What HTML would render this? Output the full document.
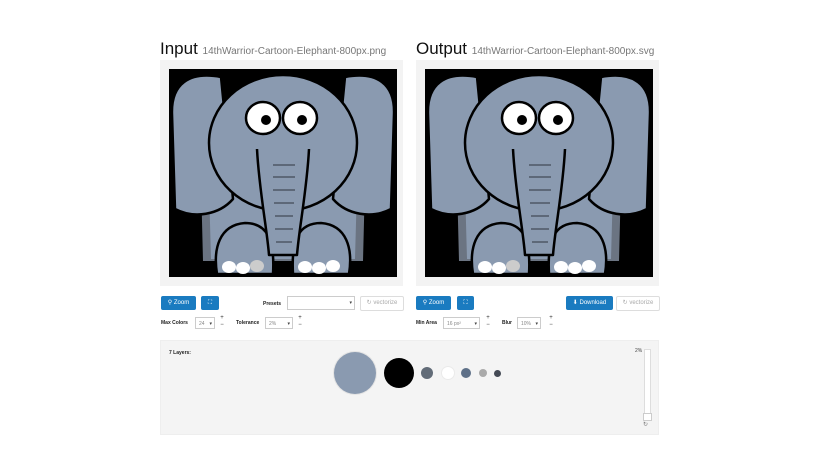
<!DOCTYPE html>
<html><head><style>
body{margin:0;width:820px;height:476px;background:#fff;font-family:"Liberation Sans",sans-serif;position:relative;overflow:hidden}
.a{position:absolute}
.h{font-size:17px;color:#111;top:39px}
.h span{font-size:10px;color:#777}
.frame{background:#f3f3f3;width:243px;height:226px;top:60px}
.blk{position:absolute;left:9px;top:9px;width:228px;height:208px;background:#000}
.btn{background:#1a7bc0;color:#fff;font-size:6px;height:14px;line-height:14px;text-align:center;border-radius:2px;top:296px}
.vb{background:#fff;border:1px solid #ddd;color:#aaa;font-size:6px;height:13px;line-height:13px;text-align:center;border-radius:2px;top:296px}
.lbl{font-size:5px;font-weight:bold;color:#222}
.sel{background:#fff;border:1px solid #ccc;height:12px;font-size:5px;color:#888;line-height:12px;padding-left:3px;box-sizing:border-box}
.sel:after{content:"▾";position:absolute;right:2px;top:0;color:#444}
.pm{font-size:6px;color:#333;line-height:7px;text-align:center;width:6px}
.c{position:absolute;border-radius:50%}
</style></head><body>
<svg width="0" height="0" style="position:absolute"><defs>
<g id="el" stroke="#000" stroke-width="2.5" stroke-linejoin="round">
<path d="M32,112 C40,100 80,110 100,120 L128,120 C148,110 188,100 196,112 L194,192 L34,192 Z" fill="#6b7482" stroke="none"/>
<path d="M40,118 C50,110 80,118 100,126 L128,126 C148,118 178,110 188,118 L186,190 L42,190 Z" fill="#8a9ab0" stroke="none"/>
<path d="M52,8 C20,2 2,15 3,45 L6,140 C25,150 50,146 64,130 Z" fill="#8a9ab0"/>
<path d="M176,8 C208,2 226,15 225,45 L222,140 C203,150 178,146 164,130 Z" fill="#8a9ab0"/>
<path d="M48,205 C44,180 50,156 76,154 C98,154 106,170 104,205 Z" fill="#8a9ab0"/>
<path d="M124,205 C122,170 130,154 152,154 C178,156 184,180 180,205 Z" fill="#8a9ab0"/>
<ellipse cx="114" cy="74" rx="74" ry="68" fill="#8a9ab0"/>
<path d="M88,80 C90,120 98,160 100,186 L128,186 C130,160 138,120 140,80" fill="#8a9ab0"/>
<g stroke="#5d6878" stroke-width="2"><line x1="104" y1="96" x2="126" y2="96"/><line x1="104" y1="108" x2="126" y2="108"/><line x1="104" y1="121" x2="126" y2="121"/><line x1="105" y1="134" x2="125" y2="134"/><line x1="106" y1="147" x2="124" y2="147"/><line x1="106" y1="160" x2="124" y2="160"/><line x1="107" y1="173" x2="123" y2="173"/></g>
<ellipse cx="94" cy="49" rx="17" ry="16" fill="#fff"/><ellipse cx="131" cy="49" rx="17" ry="16" fill="#fff"/>
<circle cx="97" cy="51" r="5" fill="#000" stroke="none"/><circle cx="133" cy="51" r="5" fill="#000" stroke="none"/>
<g stroke="none"><ellipse cx="60" cy="198" rx="7" ry="6" fill="#fff"/><ellipse cx="74" cy="199" rx="7" ry="6" fill="#fff"/><ellipse cx="88" cy="197" rx="7" ry="6" fill="#ccc"/>
<ellipse cx="136" cy="198" rx="7" ry="6" fill="#fff"/><ellipse cx="150" cy="199" rx="7" ry="6" fill="#fff"/><ellipse cx="164" cy="197" rx="7" ry="6" fill="#fff"/></g>
</g></defs></svg>
<div class="a h" style="left:160px">Input <span>14thWarrior-Cartoon-Elephant-800px.png</span></div>
<div class="a h" style="left:416px">Output <span>14thWarrior-Cartoon-Elephant-800px.svg</span></div>
<div class="a frame" style="left:160px"><div class="blk"><svg width="228" height="208"><use href="#el"/></svg></div></div>
<div class="a frame" style="left:416px"><div class="blk"><svg width="228" height="208"><use href="#el"/></svg></div></div>

<div class="a btn" style="left:161px;width:35px">&#9906; Zoom</div>
<div class="a btn" style="left:201px;width:18px">⛶</div>
<div class="a lbl" style="left:263px;top:301px">Presets</div>
<div class="a sel" style="left:287px;top:296px;width:68px;height:14px"></div>
<div class="a vb" style="left:360px;width:42px">↻ vectorize</div>
<div class="a lbl" style="left:161px;top:320px">Max Colors</div>
<div class="a sel" style="left:195px;top:317px;width:20px">24</div>
<div class="a pm" style="left:219px;top:315px">+<br>−</div>
<div class="a lbl" style="left:236px;top:320px">Tolerance</div>
<div class="a sel" style="left:265px;top:317px;width:28px">2%</div>
<div class="a pm" style="left:297px;top:315px">+<br>−</div>

<div class="a btn" style="left:416px;width:35px">&#9906; Zoom</div>
<div class="a btn" style="left:457px;width:17px">⛶</div>
<div class="a btn" style="left:566px;width:47px">⬇ Download</div>
<div class="a vb" style="left:616px;width:42px">↻ vectorize</div>
<div class="a lbl" style="left:416px;top:320px">Min Area</div>
<div class="a sel" style="left:443px;top:317px;width:37px">16 px²</div>
<div class="a pm" style="left:485px;top:315px">+<br>−</div>
<div class="a lbl" style="left:502px;top:320px">Blur</div>
<div class="a sel" style="left:517px;top:317px;width:24px">10%</div>
<div class="a pm" style="left:548px;top:315px">+<br>−</div>

<div class="a" style="left:160px;top:340px;width:499px;height:95px;background:#f4f4f4;border:1px solid #eee;box-sizing:border-box"></div>
<div class="a lbl" style="left:169px;top:350px">7 Layers:</div>
<div class="c" style="left:334px;top:352px;width:42px;height:42px;background:#8a9ab0;box-shadow:0 0 0 1px #e4e4e4"></div>
<div class="c" style="left:384px;top:358px;width:30px;height:30px;background:#000"></div>
<div class="c" style="left:421px;top:367px;width:12px;height:12px;background:#626c78"></div>
<div class="c" style="left:442px;top:367px;width:12px;height:12px;background:#fff;box-shadow:0 0 0 1px #eaeaea"></div>
<div class="c" style="left:461px;top:368px;width:10px;height:10px;background:#5e7088"></div>
<div class="c" style="left:479px;top:369px;width:8px;height:8px;background:#aaa"></div>
<div class="c" style="left:494px;top:370px;width:7px;height:7px;background:#444a55"></div>
<div class="a" style="left:635px;top:348px;font-size:5px;color:#444">2%</div>
<div class="a" style="left:644px;top:349px;width:5px;height:70px;background:#fff;border:1px solid #ddd"></div>
<div class="a" style="left:643px;top:413px;width:7px;height:6px;background:#fff;border:1px solid #ccc"></div>
<div class="a" style="left:643px;top:421px;font-size:6px;color:#777">↻</div>
</body></html>
